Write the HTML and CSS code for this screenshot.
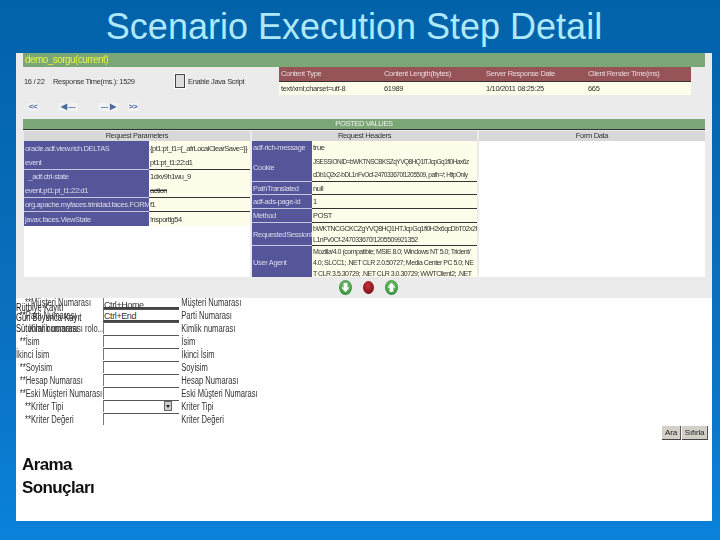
FILE: index.html
```html
<!DOCTYPE html>
<html lang="tr">
<head>
    <meta charset="UTF-8">
    <title>Scenario Execution Step Detail</title>
    <link rel="stylesheet" href="styles.css">
</head>
<body>

<h1 class="slide-title">Scenario Execution Step Detail</h1>

<div class="slide">
    <section class="panel">
        <div class="bar-title">demo_sorgu(current)</div>

        <div class="summary">
            <div class="summary-left">
                <span class="step-no">16 / 22</span>
                <span class="resp-time">Response Time(ms.): 1529</span>
                <span class="check"></span>
                <span>Enable Java Script</span>
            </div>
            <div class="info-table">
                <div class="info-head">Content Type</div>
                <div class="info-head">Content Length(bytes)</div>
                <div class="info-head">Server Response Date</div>
                <div class="info-head">Client Render Time(ms)</div>
                <div class="info-cell">text/xml;charset=utf-8</div>
                <div class="info-cell">61989</div>
                <div class="info-cell">1/10/2011 08:25:25</div>
                <div class="info-cell">665</div>
            </div>
        </div>

        <div class="pager">
            <span class="pager-btn first">&lt;&lt;</span>
            <span class="pager-btn prev">&#9664; ---</span>
            <span class="pager-btn next">--- &#9654;</span>
            <span class="pager-btn last">&gt;&gt;</span>
        </div>

        <div class="bar-posted">POSTED VALUES</div>

        <div class="values">
            <div class="col col-params">
                <div class="col-head">Request Parameters</div>
                <div class="kv kv-params">
                    <div class="key h14">oracle.adf.view.rich.DELTAS</div><div class="val h14">{pt1:pt_t1={_afrLocalClearSave=}}</div>
                    <div class="key h14">event</div><div class="val h14">pt1:pt_t1:22:d1</div>
                    <div class="key h14 line">&nbsp;&nbsp;_adf.ctrl-state</div><div class="val h14 line">1dxv9h1wu_9</div>
                    <div class="key h14">event.pt1:pt_t1:22:d1</div><div class="val h14"><s>action</s></div>
                    <div class="key h14 line">org.apache.myfaces.trinidad.faces.FORM</div><div class="val h14 line">f1</div>
                    <div class="key h15 line">javax.faces.ViewState</div><div class="val h15 line">!nsportlg54</div>
                </div>
            </div>

            <div class="col col-headers">
                <div class="col-head">Request Headers</div>
                <div class="kv kv-headers">
                    <div class="key r12">adf-rich-message</div><div class="val r12">true</div>
                    <div class="key r28">Cookie</div><div class="val r28">JSESSIONID=bWKTNSCBKSZqYVQ8HQ1lTJcpGq1fi0Hax6z<br>cDb1Q2x2-bDL1nFvOcf-247033670!1205509, path=/; HttpOnly</div>
                    <div class="key r13 line">PathTranslated</div><div class="val r13 line">null</div>
                    <div class="key r14 line">adf-ads-page-id</div><div class="val r14 line">1</div>
                    <div class="key r14 line">Method</div><div class="val r14 line">POST</div>
                    <div class="key r23 line">RequestedSessionId</div><div class="val r23 line">bWKTNCGCKCZgYVQ8HQ1HTJcpGq1fi0H2x6qcDbT02x2fNc<br>L1nPv0Cf-247033670!1205509921352</div>
                    <div class="key r32 line">User Agent</div><div class="val r32 line">Mozilla/4.0 (compatible; MSIE 8.0; Windows NT 5.0; Trident/<br>4.0; SLCC1; .NET CLR 2.0.50727; Media Center PC 5.0; NE<br>T CLR 3.5.30729; .NET CLR 3.0.30729; WWTClient2; .NET</div>
                </div>
            </div>

            <div class="col col-form">
                <div class="col-head">Form Data</div>
            </div>
        </div>

        <div class="icons">
            <svg width="13" height="15" viewBox="0 0 13 15">
                <defs>
                    <radialGradient id="greenBall" cx="50%" cy="40%" r="60%"><stop offset="0" stop-color="#8fd07a"/><stop offset="1" stop-color="#2f8c3c"/></radialGradient>
                    <radialGradient id="redBall" cx="45%" cy="35%" r="65%"><stop offset="0" stop-color="#c9303a"/><stop offset="1" stop-color="#7a0f18"/></radialGradient>
                </defs>
                <ellipse cx="6.500" cy="7.500" rx="6.500" ry="7.500" fill="url(#greenBall)"/>
                <path d="M4.700 3h3.600v4.500h2.200L6.500 12.200 2.500 7.500h2.200z" fill="#fff"/>
            </svg>
            <svg width="11" height="13" viewBox="0 0 11 13"><ellipse cx="5.500" cy="6.500" rx="5.500" ry="6.500" fill="url(#redBall)"/></svg>
            <svg width="13" height="15" viewBox="0 0 13 15">
                <ellipse cx="6.500" cy="7.500" rx="6.500" ry="7.500" fill="url(#greenBall)"/>
                <path d="M4.700 12h3.600V7.500h2.200L6.500 2.800 2.500 7.500h2.200z" fill="#fff"/>
            </svg>
        </div>
    </section>

    <section class="search">
        <div class="search-form">
            <span class="ghost ghost-a">Rütbiye Kayıtı</span>
            <span class="ghost ghost-b">Gün Boyunca Kayıt</span>
            <span class="ghost ghost-c">Sütunlar numarası</span>

            <div class="lbl ind-l">**Müşteri Numarası</div><div class="inp heavy heavy-a">Ctrl+Home</div><div class="hint">Müşteri Numarası</div>
            <div class="lbl ind-m">**Parti Numarası</div><div class="inp heavy heavy-b">Ctrl+End</div><div class="hint">Parti Numarası</div>
            <div class="lbl ind-x">Kimlik numarası rolo...</div><div class="inp"></div><div class="hint">Kimlik numarası</div>
            <div class="lbl ind-m">**İsim</div><div class="inp"></div><div class="hint">İsim</div>
            <div class="lbl ind-s">İkinci İsim</div><div class="inp"></div><div class="hint">İkinci İsim</div>
            <div class="lbl ind-m">**Soyisim</div><div class="inp"></div><div class="hint">Soyisim</div>
            <div class="lbl ind-m">**Hesap Numarası</div><div class="inp"></div><div class="hint">Hesap Numarası</div>
            <div class="lbl ind-m">**Eski Müşteri Numarası</div><div class="inp"></div><div class="hint">Eski Müşteri Numarası</div>
            <div class="lbl ind-l">**Kriter Tipi</div><div class="inp select"><span class="arrow"></span></div><div class="hint">Kriter Tipi</div>
            <div class="lbl ind-l">**Kriter Değeri</div><div class="inp"></div><div class="hint">Kriter Değeri</div>
        </div>

        <div class="actions">
            <button class="btn btn-search" type="button">Ara</button>
            <button class="btn btn-reset" type="button">Sıfırla</button>
        </div>

        <h2 class="result-title">Arama<br>Sonuçları</h2>
    </section>
</div>

</body>
</html>
```

FILE: styles.css
```css
body {
    margin: 0;
    height: 540px;
    overflow: hidden;
    background: linear-gradient(#0262a9, #0a70c0 60%, #0a82da);
    font-family: "Liberation Sans", Arial, sans-serif;
}
.slide-title {
    margin: 0;
    height: 53px;
    padding-right: 12px;
    font-size: 36px;
    font-weight: normal;
    line-height: 53px;
    text-align: center;
    color: #aee8fb;
}
.slide {
    margin: 0 8px 0 16px;
    height: 468px;
    background: #fff;
}
.panel {
    height: 245px;
    padding: 0 7px;
    background: #ebebeb;
    font-size: 7.5px;
    letter-spacing: -0.35px;
    filter: blur(0.4px);
}
.bar-title {
    height: 14px;
    padding-left: 2px;
    background: #7ba776;
    color: #e4f542;
    font-size: 10px;
    letter-spacing: -0.55px;
    line-height: 14px;
}

/* fila superior */
.summary {
    display: flex;
    justify-content: space-between;
    height: 28px;
    padding-right: 14px;
}
.summary-left {
    display: flex;
    align-items: center;
    color: #333;
}
.step-no {
    width: 30px;
    padding-left: 1px;
    box-sizing: border-box;
}
.resp-time {
    width: 122px;
}
.check {
    width: 8px;
    height: 12px;
    margin-right: 3px;
    background: #ddd;
    border: 1px solid #444;
    box-shadow: 0 0 0 1px #fff;
}
.info-table {
    display: grid;
    grid-template-columns: 103px 102px 102px 105px;
    grid-template-rows: 15px 13px;
}
.info-head {
    padding-left: 2px;
    background: #965358;
    border-bottom: 1px solid #333;
    color: #e8dada;
    line-height: 14px;
}
.info-cell {
    padding-left: 2px;
    background: #fdfdea;
    color: #333;
    line-height: 13px;
}

/* navegacion */
.pager {
    display: flex;
    height: 24px;
    align-items: center;
    color: #4a6aa0;
    font-size: 8px;
    font-weight: bold;
}
.pager-btn {
    display: block;
    text-align: center;
    background: #f2f2f2;
    line-height: 8px;
}
.first {
    width: 10px;
    margin-left: 5px;
}
.prev {
    width: 20px;
    margin-left: 20px;
}
.next {
    width: 20px;
    margin-left: 20px;
}
.last {
    width: 10px;
    margin-left: 10px;
}
.bar-posted {
    height: 10px;
    background: #7ba776;
    border-bottom: 1px solid #333;
    color: #eee;
    line-height: 10px;
    text-align: center;
}

/* tablas de valores */
.values {
    display: grid;
    grid-template-columns: 227px 225px 226px;
    column-gap: 2px;
    margin-top: 1px;
    height: 146px;
    overflow: hidden;
    background: #ebebeb;
}
.col {
    background: #fff;
}
.col-params {
    width: 226px;
    margin-left: 1px;
}
.col-headers {
    background: #fdfdea;
}
.col-form {
    width: 226px;
}
.col-head {
    height: 10px;
    background: #d8d8d8;
    color: #333;
    line-height: 10px;
    text-align: center;
}
.kv {
    display: grid;
    background: #fdfdea;
}
.kv-params {
    grid-template-columns: 125px 101px;
}
.kv-headers {
    grid-template-columns: 60px 165px;
}
.key {
    padding-left: 1px;
    background: #55559a;
    color: #dcdcec;
    overflow: hidden;
    white-space: nowrap;
}
.val {
    padding-left: 1px;
    color: #333;
    overflow: hidden;
    white-space: nowrap;
}
.key, .val {
    display: flex;
    align-items: center;
}
.kv-params .val {
    letter-spacing: -0.5px;
}
.val.r28, .val.r23, .val.r32 {
    font-size: 7px;
    letter-spacing: -0.5px;
    display: block;
}
.val.r28 {
    font-size: 6.5px;
    padding-top: 2px;
    height: 26px;
}
.key.line {
    border-top: 1px solid #c6c6e0;
}
.val.line {
    border-top: 1px solid #333;
}
.h14 { height: 14px; }
.h15 { height: 15px; }
.line.h14 { height: 13px; }
.line.h15 { height: 14px; }
.r12 { height: 12px; }
.r28 { height: 28px; line-height: 13px; }
.r13 { height: 12px; }
.r14 { height: 13px; }
.r23 { height: 22px; line-height: 11px; }
.r32 { height: 33px; line-height: 11px; }
.icons {
    display: flex;
    align-items: center;
    justify-content: center;
    gap: 11px;
    height: 21px;
    padding-left: 8px;
}

/* formulario de busqueda */
.search {
    height: 223px;
    overflow: hidden;
    filter: blur(0.3px);
}
.search-form {
    position: relative;
    display: grid;
    grid-template-columns: 87px 76px 1fr;
    grid-auto-rows: 13px;
    margin-top: -2px;
    color: #333;
    font-size: 10px;
    line-height: 13px;
}
.lbl {
    width: 112px;
    white-space: nowrap;
    transform: scaleX(0.76);
    transform-origin: left center;
}
.ind-s { padding-left: 0; }
.ind-m { padding-left: 5px; }
.ind-l { padding-left: 12px; }
.ind-x { padding-left: 17px; }
.inp {
    position: relative;
    box-sizing: border-box;
    height: 12px;
    border-top: 1px solid #555;
    border-left: 1px solid #777;
    background: #fff;
    font-size: 9px;
    letter-spacing: -0.4px;
    line-height: 10px;
}
.heavy {
    border-bottom: 2px solid #444;
    height: 13px;
}
.heavy-a { padding-top: 3px; }
.heavy-b { padding-top: 1px; }
.arrow {
    position: absolute;
    top: 0;
    right: 7px;
    width: 8px;
    height: 10px;
    background: #ccc;
    border: 1px solid #666;
    box-sizing: border-box;
}
.arrow::after {
    content: "";
    position: absolute;
    top: 3px;
    left: 1px;
    border: 2px solid transparent;
    border-top: 3px solid #222;
    border-bottom: 0;
}
.hint {
    padding-left: 3px;
    white-space: nowrap;
    transform: scaleX(0.76);
    transform-origin: left center;
}
.ghost {
    position: absolute;
    left: 0;
    color: #111;
    white-space: nowrap;
    transform: scaleX(0.76);
    transform-origin: left center;
}
.ghost-a { top: 5px; }
.ghost-b { top: 15px; }
.ghost-c { top: 26px; }

.actions {
    display: flex;
    justify-content: flex-end;
    gap: 1px;
    padding-right: 4px;
    height: 14px;
}
.btn {
    height: 14px;
    padding: 0;
    border: 0;
    border-right: 1px solid #555;
    border-bottom: 1px solid #444;
    background: #d4d0c8;
    color: #222;
    font-family: "Liberation Sans", Arial, sans-serif;
    font-size: 8px;
    letter-spacing: -0.2px;
}
.btn-search { width: 19px; }
.btn-reset { width: 26px; }
.result-title {
    margin: 13px 0 0 6px;
    color: #111;
    font-size: 17px;
    letter-spacing: -0.6px;
    line-height: 23px;
}
```
